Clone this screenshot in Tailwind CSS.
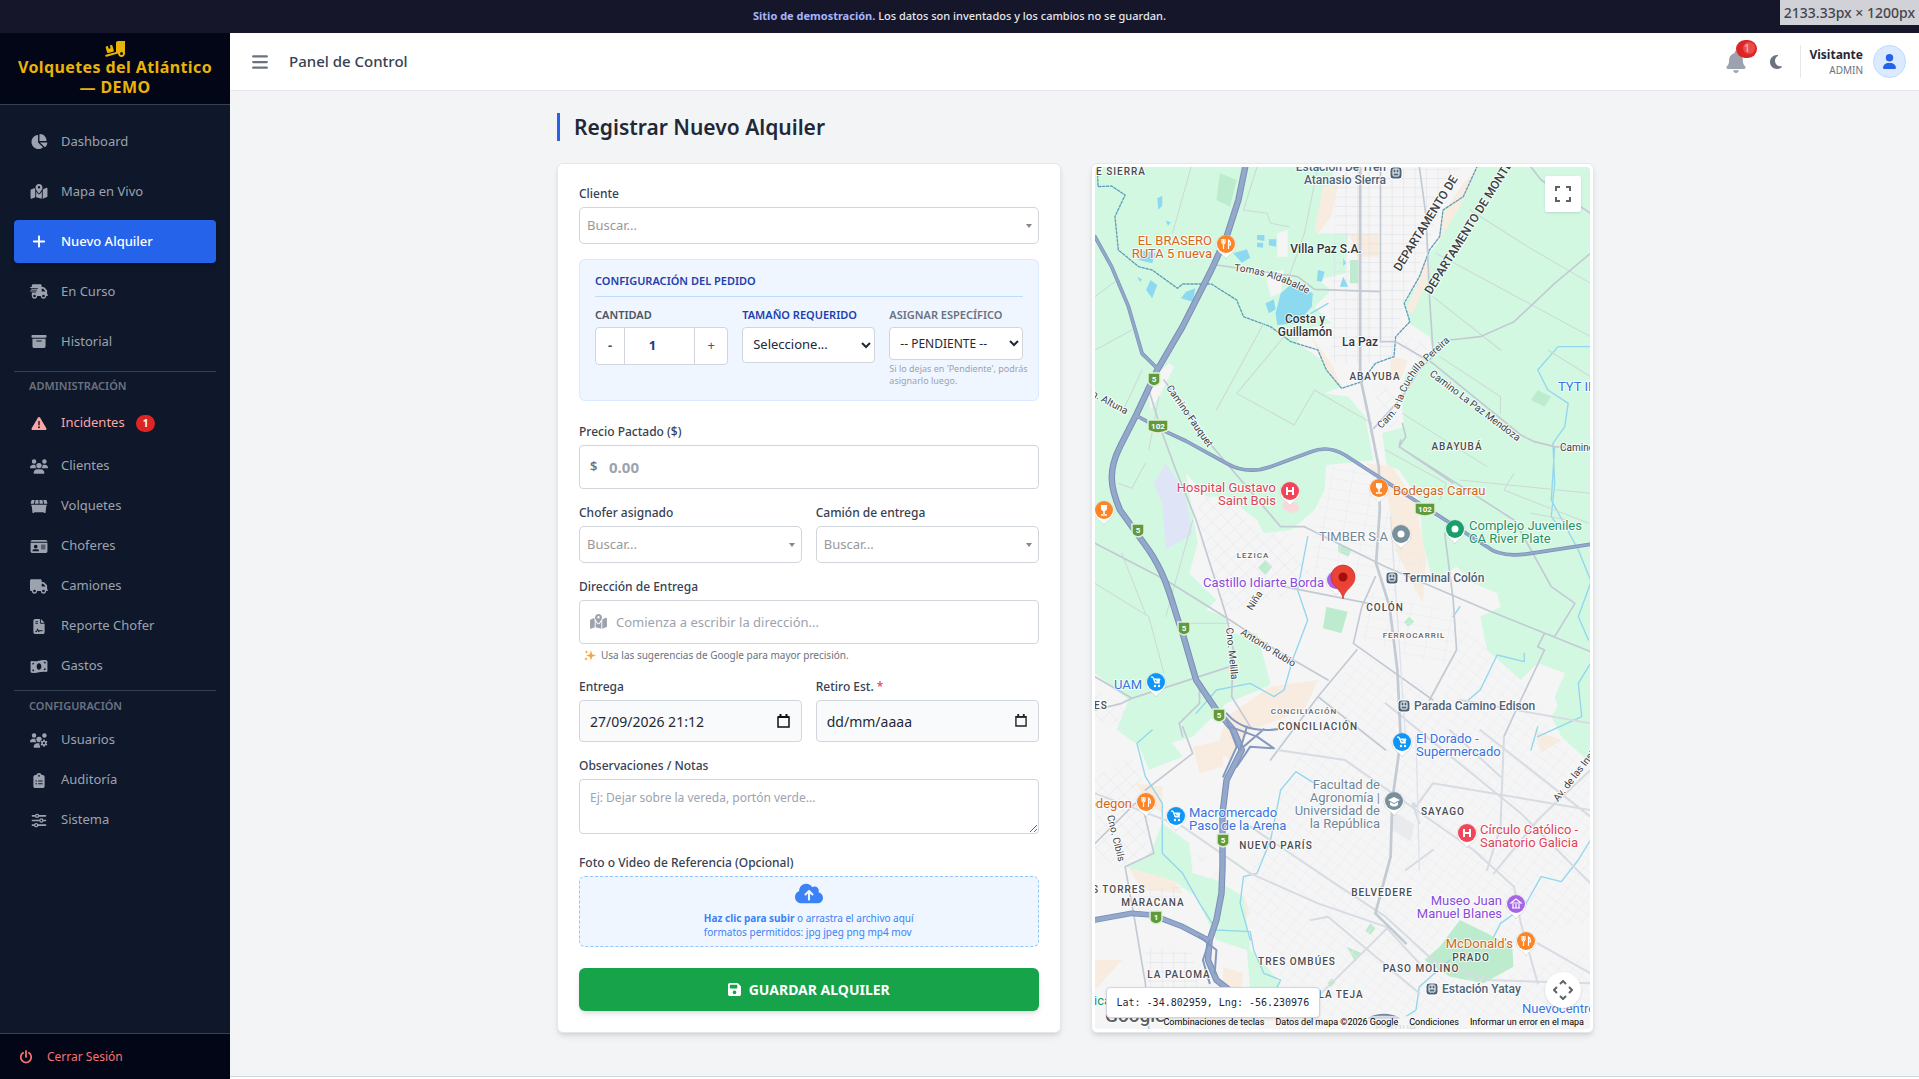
<!DOCTYPE html>
<html lang="es">
<head>
    <meta charset="UTF-8">
    <meta name="viewport" content="width=device-width, initial-scale=1.0">
    <title>Registrar Nuevo Alquiler - Volquetes del Atlántico</title>
    <script src="https://cdn.jsdelivr.net/npm/@tailwindcss/browser@4"></script>
</head>
<body class="h-screen flex flex-col overflow-hidden bg-[#f3f4f6] text-gray-800 font-['Noto_Sans','Open_Sans',sans-serif]">

    <!-- Aviso de demo -->
    <div class="relative shrink-0 h-[33px] bg-[#16162a] text-gray-200 text-[11px] font-medium flex items-center justify-center">
        <p><b class="font-bold text-[#a5b4fc]">Sitio de demostración.</b> Los datos son inventados y los cambios no se guardan.</p>
        <div class="absolute top-0 right-0 h-[25px] px-1 bg-[#d1d1d8] text-[#45454d] text-[14px] flex items-center">2133.33px × 1200px</div>
    </div>

    <div class="flex-1 flex min-h-0">
        <!-- Menú lateral -->
        <aside class="w-[230px] shrink-0 bg-[#0f172a] text-[#9ca3af] flex flex-col">
            <div class="h-[72px] shrink-0 bg-[#020617] border-b border-[#374151] text-[#eab308] font-bold text-[16px] leading-5 tracking-wide text-center flex flex-col items-center pt-2">
                <svg class="w-5 h-4 shrink-0" viewBox="0 0 640 512" fill="currentColor"><path d="M640 0l0 400c0 61.9-50.1 112-112 112c-61 0-111.1-48.7-112-109.5L48.4 502.9c-17.1 4.6-34.6-5.4-39.3-22.5s5.4-34.6 22.5-39.3L352 353.8 352 64c0-35.3 28.7-64 64-64L640 0zM576 400a48 48 0 1 0 -96 0 48 48 0 1 0 96 0zM23.1 207.7c-4.6-17.1 5.6-34.6 22.6-39.2l46.4-12.4 20.7 77.3c2.3 8.5 11.1 13.6 19.6 11.3l30.9-8.3c8.5-2.3 13.6-11.1 11.3-19.6l-20.7-77.3 46.4-12.4c17.1-4.6 34.6 5.6 39.2 22.6l41.4 154.5c4.6 17.1-5.6 34.6-22.6 39.2L103.7 384.9c-17.1 4.6-34.6-5.6-39.2-22.6L23.1 207.7z"/></svg>
                <span>Volquetes del Atlántico<br>— DEMO</span>
            </div>
            <nav class="flex-1 px-[14px] pt-[15px] text-[13px]">
                <div class="flex flex-col gap-[7px]">
                    <a href="#" class="h-[43px] px-4 flex items-center gap-[13px]">
                        <svg class="w-[18px] h-[15px]" viewBox="0 0 576 512" fill="currentColor"><path d="M304 240l0-223.4c0-9 7-16.6 16-16.6C443.7 0 544 100.3 544 224c0 9-7.6 16-16.6 16L304 240zM32 272C32 150.7 122.1 50.3 239 34.3c9.2-1.3 17 6.1 17 15.4L256 288 412.5 444.5c6.7 6.7 6.2 17.7-1.5 23.1C371.8 495.6 323.8 512 272 512C139.5 512 32 404.6 32 272zm526.4 16c9.3 0 16.6 7.8 15.4 17c-7.7 55.9-34.6 105.6-73.9 142.3c-6 5.6-15.4 5.2-21.2-.7L320 288l238.4 0z"/></svg>
                        Dashboard
                    </a>
                    <a href="#" class="h-[43px] px-4 flex items-center gap-[13px]">
                        <svg class="w-[18px] h-[15px]" viewBox="0 0 576 512" fill="currentColor"><path d="M408 120c0 54.6-73.1 151.9-105.2 192c-7.7 9.6-22 9.6-29.6 0C241.1 271.9 168 174.6 168 120C168 53.7 221.7 0 288 0s120 53.7 120 120zm8 80.4c3.5-6.9 6.7-13.8 9.6-20.6c.5-1.2 1-2.5 1.5-3.7l116-46.4C558.9 123.4 576 135 576 152l0 270.8c0 9.8-6 18.6-15.1 22.3L416 503l0-302.6zM137.6 138.3c2.4 14.1 7.2 28.3 12.8 41.5c2.9 6.8 6.1 13.7 9.6 20.6l0 251.4L32.9 502.7C17.1 509 0 497.4 0 480.4L0 209.6c0-9.8 6-18.6 15.1-22.3l122.6-49zM327.8 332c13.9-17.4 35.7-45.7 56.2-77l0 249.3L192 449.4 192 255c20.5 31.3 42.3 59.6 56.2 77c20.5 25.6 59.1 25.6 79.6 0zM288 152a40 40 0 1 0 0-80 40 40 0 1 0 0 80z"/></svg>
                        Mapa en Vivo
                    </a>
                    <a href="#" class="h-[43px] px-4 flex items-center gap-[13px] bg-[#2563eb] text-white font-medium rounded shadow-md">
                        <svg class="w-[18px] h-[15px]" viewBox="0 0 448 512" fill="currentColor"><path d="M256 80c0-17.7-14.3-32-32-32s-32 14.3-32 32l0 144L48 224c-17.7 0-32 14.3-32 32s14.3 32 32 32l144 0 0 144c0 17.7 14.3 32 32 32s32-14.3 32-32l0-144 144 0c17.7 0 32-14.3 32-32s-14.3-32-32-32l-144 0 0-144z"/></svg>
                        Nuevo Alquiler
                    </a>
                    <a href="#" class="h-[43px] px-4 flex items-center gap-[13px]">
                        <svg class="w-[18px] h-[15px]" viewBox="0 0 640 512" fill="currentColor"><path d="M112 0C85.5 0 64 21.5 64 48l0 48L16 96c-8.8 0-16 7.2-16 16s7.2 16 16 16l48 0 208 0c8.8 0 16 7.2 16 16s-7.2 16-16 16L64 160l-16 0c-8.8 0-16 7.2-16 16s7.2 16 16 16l16 0 176 0c8.8 0 16 7.2 16 16s-7.2 16-16 16L64 224l-48 0c-8.8 0-16 7.2-16 16s7.2 16 16 16l48 0 144 0c8.8 0 16 7.2 16 16s-7.2 16-16 16L64 288l0 128c0 53 43 96 96 96s96-43 96-96l128 0c0 53 43 96 96 96s96-43 96-96l32 0c17.7 0 32-14.3 32-32s-14.3-32-32-32l0-64 0-32 0-18.7c0-17-6.7-33.3-18.7-45.3L512 114.7c-12-12-28.3-18.7-45.3-18.7L416 96l0-48c0-26.5-21.5-48-48-48L112 0zM544 237.3l0 18.7-128 0 0-96 50.7 0L544 237.3zM160 368a48 48 0 1 1 0 96 48 48 0 1 1 0-96zm272 48a48 48 0 1 1 96 0 48 48 0 1 1 -96 0z"/></svg>
                        En Curso
                    </a>
                    <a href="#" class="h-[43px] px-4 flex items-center gap-[13px]">
                        <svg class="w-[18px] h-[15px]" viewBox="0 0 512 512" fill="currentColor"><path d="M32 32l448 0c17.7 0 32 14.3 32 32l0 32c0 17.7-14.3 32-32 32L32 128C14.3 128 0 113.7 0 96L0 64C0 46.3 14.3 32 32 32zm0 128l448 0 0 256c0 35.3-28.7 64-64 64L96 480c-35.3 0-64-28.7-64-64l0-256zm128 80c0 8.8 7.2 16 16 16l160 0c8.8 0 16-7.2 16-16s-7.2-16-16-16l-160 0c-8.8 0-16 7.2-16 16z"/></svg>
                        Historial
                    </a>
                </div>

                <p class="mt-2 border-t border-[#374151] pt-[6px] pl-[15px] text-[11px] leading-4 font-semibold text-[#6b7280]">ADMINISTRACIÓN</p>
                <div class="mt-2 flex flex-col gap-1">
                    <a href="#" class="h-[42px] px-4 flex items-center gap-[13px] text-[#fca5a5]">
                        <svg class="w-[18px] h-[15px]" viewBox="0 0 512 512" fill="currentColor"><path d="M256 32c14.2 0 27.3 7.5 34.5 19.8l216 368c7.3 12.4 7.3 27.7 .2 40.1S486.3 480 472 480L40 480c-14.3 0-27.6-7.7-34.7-20.1s-7-27.8 .2-40.1l216-368C228.7 39.5 241.8 32 256 32zm0 128c-13.3 0-24 10.7-24 24l0 112c0 13.3 10.7 24 24 24s24-10.7 24-24l0-112c0-13.3-10.7-24-24-24zm32 224a32 32 0 1 0 -64 0 32 32 0 1 0 64 0z"/></svg>
                        Incidentes
                        <span class="-ml-[2px] h-[17px] px-[7px] rounded-full bg-[#dc2626] text-white text-[10px] font-bold flex items-center">1</span>
                    </a>
                    <a href="#" class="h-9 px-4 flex items-center gap-[13px]">
                        <svg class="w-[18px] h-[15px]" viewBox="0 0 640 512" fill="currentColor"><path d="M144 0a80 80 0 1 1 0 160A80 80 0 1 1 144 0zM512 0a80 80 0 1 1 0 160A80 80 0 1 1 512 0zM0 298.7C0 239.8 47.8 192 106.7 192l42.7 0c15.9 0 31 3.5 44.6 9.7c-1.3 7.2-1.9 14.7-1.9 22.3c0 38.2 16.8 72.5 43.3 96c-.2 0-.4 0-.7 0L21.3 320C9.6 320 0 310.4 0 298.7zM405.3 320c-.2 0-.4 0-.7 0c26.6-23.5 43.3-57.8 43.3-96c0-7.6-.7-15-1.9-22.3c13.6-6.3 28.7-9.7 44.6-9.7l42.7 0C592.2 192 640 239.8 640 298.7c0 11.8-9.6 21.3-21.3 21.3l-213.3 0zM224 224a96 96 0 1 1 192 0 96 96 0 1 1 -192 0zM128 485.3C128 411.7 187.7 352 261.3 352l117.3 0C452.3 352 512 411.7 512 485.3c0 14.7-11.9 26.7-26.7 26.7l-330.7 0c-14.7 0-26.7-11.9-26.7-26.7z"/></svg>
                        Clientes
                    </a>
                    <a href="#" class="h-9 px-4 flex items-center gap-[13px]">
                        <svg class="w-[18px] h-[15px]" viewBox="0 0 576 512" fill="currentColor"><path d="M50 32h91l-26 128H18c-12 0-19-9-16-20L34 44c2-7 8-12 16-12zM173 32h99v128H147zM304 32h99l26 128H304zM435 32h91c8 0 14 5 16 12l32 96c3 11-4 20-16 20h-97zM32 192h512c9 0 16 7 16 16v16h-8c-9 0-16 7-16 16l-4 32-20 176c0 18-14 32-32 32s-32-14-32-32H128c0 18-14 32-32 32s-32-14-32-32L44 272l-4-32c0-9-7-16-16-16h-8v-16c0-9 7-16 16-16z"/></svg>
                        Volquetes
                    </a>
                    <a href="#" class="h-9 px-4 flex items-center gap-[13px]">
                        <svg class="w-[18px] h-[15px]" viewBox="0 0 576 512" fill="currentColor"><path d="M0 96l576 0c0-35.3-28.7-64-64-64L64 32C28.7 32 0 60.7 0 96zm0 32L0 416c0 35.3 28.7 64 64 64l448 0c35.3 0 64-28.7 64-64l0-288L0 128zM64 405.3c0-29.5 23.9-53.3 53.3-53.3l117.3 0c29.5 0 53.3 23.9 53.3 53.3c0 5.9-4.8 10.7-10.7 10.7L74.7 416c-5.9 0-10.7-4.8-10.7-10.7zM176 192a64 64 0 1 1 0 128 64 64 0 1 1 0-128zm176 16c0-8.8 7.2-16 16-16l128 0c8.8 0 16 7.2 16 16s-7.2 16-16 16l-128 0c-8.8 0-16-7.2-16-16zm0 64c0-8.8 7.2-16 16-16l128 0c8.8 0 16 7.2 16 16s-7.2 16-16 16l-128 0c-8.8 0-16-7.2-16-16zm0 64c0-8.8 7.2-16 16-16l128 0c8.8 0 16 7.2 16 16s-7.2 16-16 16l-128 0c-8.8 0-16-7.2-16-16z"/></svg>
                        Choferes
                    </a>
                    <a href="#" class="h-9 px-4 flex items-center gap-[13px]">
                        <svg class="w-[18px] h-[15px]" viewBox="0 0 640 512" fill="currentColor"><path d="M48 0C21.5 0 0 21.5 0 48L0 368c0 26.5 21.5 48 48 48l16 0c0 53 43 96 96 96s96-43 96-96l128 0c0 53 43 96 96 96s96-43 96-96l32 0c17.7 0 32-14.3 32-32s-14.3-32-32-32l0-64 0-32 0-18.7c0-17-6.7-33.3-18.7-45.3L512 114.7c-12-12-28.3-18.7-45.3-18.7L416 96l0-48c0-26.5-21.5-48-48-48L48 0zM416 160l50.7 0L544 237.3l0 18.7-128 0 0-96zM112 416a48 48 0 1 1 96 0 48 48 0 1 1 -96 0zm368-48a48 48 0 1 1 0 96 48 48 0 1 1 0-96z"/></svg>
                        Camiones
                    </a>
                    <a href="#" class="h-9 px-4 flex items-center gap-[13px]">
                        <svg class="w-[18px] h-[15px]" viewBox="0 0 384 512" fill="currentColor" fill-rule="evenodd"><path d="M64 0h160v128c0 18 14 32 32 32h128v288c0 35-29 64-64 64H64c-35 0-64-29-64-64V64C0 29 29 0 64 0zm192 0l128 128H256zM80 64c-21 0-21 32 0 32h64c21 0 21-32 0-32zm0 64c-21 0-21 32 0 32h64c21 0 21-32 0-32zM64 416c-10 0-16 32 16 32h4c24 0 45-16 52-39l8-28 21 56c5 14 25 16 34 3l11-20h94c21 0 21-32 0-32H198c-14 0-16 3-20 11l-19-56c-6-17-30-17-36 1l-18 57c-3 9-11 15-21 15z"/></svg>
                        Reporte Chofer
                    </a>
                    <a href="#" class="h-9 px-4 flex items-center gap-[13px]">
                        <svg class="w-[18px] h-[15px]" viewBox="0 0 576 512" fill="currentColor" fill-rule="evenodd"><path d="M0 112c0-26 21-44 48-40 80 14 160 8 240-16S448 20 540 40c22 5 36 24 36 46v314c0 26-21 44-48 40-80-14-160-8-240 16S128 492 36 472c-22-5-36-24-36-46zM288 144c-53 0-80 50-80 112s27 112 80 112 80-50 80-112-27-112-80-112zM64 136v56c32 0 60-22 62-52zM64 410c22 5 42 8 64 6 0-34-28-64-64-64zM512 160c-34-2-60-32-62-62 22-2 42 0 62 4zM512 376c-24-3-42-4-64-2 2-34 30-58 64-54z"/></svg>
                        Gastos
                    </a>
                </div>

                <p class="mt-[6px] border-t border-[#374151] pt-[7px] pl-[15px] text-[11px] leading-4 font-semibold text-[#6b7280]">CONFIGURACIÓN</p>
                <div class="mt-2 flex flex-col gap-1">
                    <a href="#" class="h-9 px-4 flex items-center gap-[13px]">
                        <svg class="w-[18px] h-[15px]" viewBox="0 0 640 512" fill="currentColor"><path d="M144 160A80 80 0 1 0 144 0a80 80 0 1 0 0 160zm368 0A80 80 0 1 0 512 0a80 80 0 1 0 0 160zM0 298.7C0 310.4 9.6 320 21.3 320l213.3 0c.2 0 .4 0 .7 0c-26.6-23.5-43.3-57.8-43.3-96c0-7.6 .7-15 1.9-22.3c-13.6-6.3-28.7-9.7-44.6-9.7l-42.7 0C47.8 192 0 239.8 0 298.7zM320 320c-53 0-96-43-96-96a96 96 0 1 1 190 18c-30 18-60 40-66 74zM261 352h75c-10 40 0 76 24 104v56H155c-15 0-27-12-27-27 0-73 60-133 133-133z"/><path fill-rule="evenodd" d="M472 224h48l8 40 28 16 38-13 24 42-30 27v32l30 27-24 42-38-13-28 16-8 40h-48l-8-40-28-16-38 13-24-42 30-27v-32l-30-27 24-42 38 13 28-16zm24 88a40 40 0 1 0 0 80 40 40 0 1 0 0-80z"/></svg>
                        Usuarios
                    </a>
                    <a href="#" class="h-9 px-4 flex items-center gap-[13px]">
                        <svg class="w-[18px] h-[15px]" viewBox="0 0 384 512" fill="currentColor"><path d="M192 0c-41.8 0-77.4 26.7-90.5 64L64 64C28.7 64 0 92.7 0 128L0 448c0 35.3 28.7 64 64 64l256 0c35.3 0 64-28.7 64-64l0-320c0-35.3-28.7-64-64-64l-37.5 0C269.4 26.7 233.8 0 192 0zm0 64a32 32 0 1 1 0 64 32 32 0 1 1 0-64zM72 272a24 24 0 1 1 48 0 24 24 0 1 1 -48 0zm104-16l128 0c8.8 0 16 7.2 16 16s-7.2 16-16 16l-128 0c-8.8 0-16-7.2-16-16s7.2-16 16-16zM72 368a24 24 0 1 1 48 0 24 24 0 1 1 -48 0zm88 0c0-8.8 7.2-16 16-16l128 0c8.8 0 16 7.2 16 16s-7.2 16-16 16l-128 0c-8.8 0-16-7.2-16-16z"/></svg>
                        Auditoría
                    </a>
                    <a href="#" class="h-9 px-4 flex items-center gap-[13px]">
                        <svg class="w-[18px] h-[15px]" viewBox="0 0 512 512" fill="none" stroke="currentColor" stroke-width="56" stroke-linecap="round"><path d="M32 96h96M256 96h224M32 256h224M400 256h80M32 416h64M224 416h256"/><g stroke-width="44"><circle cx="192" cy="96" r="52"/><circle cx="336" cy="256" r="52"/><circle cx="160" cy="416" r="52"/></g></svg>
                        Sistema
                    </a>
                </div>
            </nav>
            <a href="#" class="h-[46px] shrink-0 bg-[#020617] border-t border-[#374151] text-[#f87171] text-[12px] flex items-center gap-[14px] pl-[19px]">
                <svg class="w-[14px] h-[14px]" viewBox="0 0 512 512" fill="none" stroke="currentColor" stroke-width="64" stroke-linecap="round"><path d="M256 32v220M152 104a192 192 0 1 0 208 0"/></svg>
                Cerrar Sesión
            </a>
        </aside>

        <div class="flex-1 min-w-0 flex flex-col">
            <!-- Barra superior -->
            <header class="h-[58px] shrink-0 bg-white border-b border-gray-200 flex items-center justify-between pl-[22px] pr-[13px]">
                <div class="flex items-center gap-[21px]">
                    <button type="button" aria-label="Menú" class="text-[#6b7280]">
                        <svg class="w-4 h-[18px]" viewBox="0 0 448 512" fill="currentColor"><path d="M0 96C0 78.3 14.3 64 32 64l384 0c17.7 0 32 14.3 32 32s-14.3 32-32 32L32 128C14.3 128 0 113.7 0 96zM0 256c0-17.7 14.3-32 32-32l384 0c17.7 0 32 14.3 32 32s-14.3 32-32 32L32 288c-17.7 0-32-14.3-32-32zM448 416c0 17.7-14.3 32-32 32L32 448c-17.7 0-32-14.3-32-32s14.3-32 32-32l384 0c17.7 0 32 14.3 32 32z"/></svg>
                    </button>
                    <h2 class="text-[15px] font-medium text-[#374151]">Panel de Control</h2>
                </div>
                <div class="flex items-center">
                    <button type="button" aria-label="Notificaciones" class="relative text-[#9ca3af] mr-[24px]">
                        <svg class="w-5 h-[22px]" viewBox="0 0 448 512" fill="currentColor"><path d="M224 0c-17.7 0-32 14.3-32 32l0 19.2C119 66 64 130.6 64 208l0 18.8c0 47-17.3 92.4-48.5 127.6l-7.4 8.3c-8.4 9.4-10.4 22.9-5.3 34.4S19.4 416 32 416l384 0c12.6 0 24-7.4 29.2-18.9s3.1-25-5.3-34.4l-7.4-8.3C401.3 319.2 384 273.9 384 226.8l0-18.8c0-77.4-55-142-128-156.8L256 32c0-17.7-14.3-32-32-32zm45.3 493.3c12-12 18.7-28.3 18.7-45.3l-64 0-64 0c0 17 6.7 33.3 18.7 45.3s28.3 18.7 45.3 18.7s33.3-6.7 45.3-18.7z"/></svg>
                        <span class="absolute -top-[11px] left-[10px] w-[21px] h-[18px] rounded-full bg-[#dc2626] text-[#fecaca] text-[10px] font-bold flex items-center justify-center">1</span>
                        <span class="absolute -top-[9px] left-[17px] size-3 rounded-full bg-[#f87171]/50"></span>
                    </button>
                    <button type="button" aria-label="Modo oscuro" class="text-[#6b7280] mr-[18px]">
                        <svg class="w-3 h-4" viewBox="0 0 384 512" fill="currentColor"><path d="M223.5 32C100 32 0 132.3 0 256S100 480 223.5 480c60.6 0 115.5-24.2 155.8-63.4c5-4.9 6.3-12.5 3.1-18.7s-10.1-9.7-17-8.5c-9.8 1.7-19.8 2.6-30.1 2.6c-96.9 0-175.5-78.8-175.5-176c0-65.8 36-123.1 89.3-153.3c6.1-3.5 9.2-10.5 7.7-17.3s-7.3-11.9-14.3-12.5c-6.3-.5-12.6-.8-19-.8z"/></svg>
                    </button>
                    <div class="h-[33px] border-l border-gray-200 pl-2 flex items-center gap-[10px]">
                        <div class="text-right">
                            <p class="text-[12px] leading-4 font-bold text-gray-800">Visitante</p>
                            <p class="text-[10px] leading-[14px] text-gray-500">ADMIN</p>
                        </div>
                        <div class="size-[33px] rounded-full bg-[#dbeafe] border border-[#bfdbfe] text-[#2563eb] flex items-center justify-center">
                            <svg class="w-[13px] h-[15px]" viewBox="0 0 448 512" fill="currentColor"><path d="M224 256A128 128 0 1 0 224 0a128 128 0 1 0 0 256zm-45.7 48C79.8 304 0 383.8 0 482.3C0 498.7 13.3 512 29.7 512l388.6 0c16.4 0 29.7-13.3 29.7-29.7C448 383.8 368.2 304 269.7 304l-91.4 0z"/></svg>
                        </div>
                    </div>
                </div>
            </header>

            <main class="flex-1 min-h-0 pl-[26px] pr-6 pt-[22px] flex flex-col">
                <div class="w-full max-w-[1037px] mx-auto">
                    <h1 class="border-l-[3px] border-[#2563eb] pl-[14px] text-[21px] leading-7 font-semibold text-[#1f2937] mb-[22px]">Registrar Nuevo Alquiler</h1>

                    <div class="grid grid-cols-2 gap-[30px]">
                        <form class="bg-white border border-gray-200 rounded-md shadow-md p-[21px] text-[12px] flex flex-col gap-[15px]">
                            <div>
                                <label for="cliente" class="block font-medium leading-[18px] mb-1 text-[#374151]">Cliente</label>
                                <div class="relative">
                                    <select id="cliente" class="appearance-none w-full h-[37px] border border-gray-300 rounded-[5px] bg-white pl-[7px] text-[13px] text-[#999]"><option>Buscar...</option></select>
                                    <span class="absolute right-[7px] top-[17px] border-x-[3px] border-t-4 border-x-transparent border-t-[#888]"></span>
                                </div>
                            </div>

                            <fieldset class="bg-[#eff6ff] border border-[#dbeafe] rounded-md px-[15px] pt-3 pb-[13px] mb-[7px]">
                                <h3 class="text-[11px] leading-[18px] font-semibold text-[#1e40af] border-b border-[#bfdbfe] pb-[6px] mb-[10px]">CONFIGURACIÓN DEL PEDIDO</h3>
                                <div class="grid grid-cols-3 gap-[14px] items-start">
                                    <div>
                                        <label for="cantidad" class="block text-[11px] leading-4 mb-1 font-semibold text-[#4b5563]">CANTIDAD</label>
                                        <div class="h-[38px] flex border border-gray-300 rounded bg-white text-gray-600 overflow-hidden">
                                            <button type="button" class="w-7 font-bold text-[13px]">-</button>
                                            <input id="cantidad" type="text" inputmode="numeric" value="1" class="flex-1 min-w-0 border-x border-gray-300 pr-[14px] text-center text-[13px] font-bold text-[#1e3a8a]">
                                            <button type="button" class="w-8 text-[13px]">+</button>
                                        </div>
                                    </div>
                                    <div>
                                        <label for="tamano" class="block text-[11px] leading-4 mb-1 font-semibold text-[#1e40af]">TAMAÑO REQUERIDO</label>
                                        <div class="relative">
                                            <select id="tamano" class="appearance-none w-full h-9 border border-gray-300 rounded bg-white pl-[10px] text-[13px] text-gray-800"><option>Seleccione...</option></select>
                                            <svg class="absolute right-1 top-[14px] w-[10px] h-2" viewBox="0 0 10 8" fill="none" stroke="#1f2937" stroke-width="2"><path d="M1 2l4 4 4-4"/></svg>
                                        </div>
                                    </div>
                                    <div>
                                        <label for="asignar" class="block text-[11px] leading-4 mb-1 font-semibold text-[#6b7280]">ASIGNAR ESPECÍFICO</label>
                                        <div class="relative">
                                            <select id="asignar" class="appearance-none w-full h-[33px] border border-gray-300 rounded bg-white pl-[10px] text-[12px] text-gray-800"><option>-- PENDIENTE --</option></select>
                                            <svg class="absolute right-1 top-3 w-[10px] h-2" viewBox="0 0 10 8" fill="none" stroke="#1f2937" stroke-width="2"><path d="M1 2l4 4 4-4"/></svg>
                                        </div>
                                        <p class="mt-[3px] -mr-3 text-[9px] leading-3 text-[#9ca3af]">Si lo dejas en 'Pendiente', podrás<br>asignarlo luego.</p>
                                    </div>
                                </div>
                            </fieldset>

                            <div>
                                <label for="precio" class="block font-medium leading-[18px] mb-1 text-[#374151]">Precio Pactado ($)</label>
                                <div class="relative">
                                    <span class="absolute inset-y-0 left-[11px] flex items-center font-semibold text-[13px] text-gray-500">$</span>
                                    <input id="precio" type="text" placeholder="0.00" class="w-full h-11 border border-gray-300 rounded pl-[29px] text-[15px] font-bold placeholder:text-[#9ca3af]">
                                </div>
                            </div>

                            <div class="grid grid-cols-2 gap-[14px]">
                                <div>
                                    <label for="chofer" class="block font-medium leading-[18px] mb-1 text-[#374151]">Chofer asignado</label>
                                    <div class="relative">
                                        <select id="chofer" class="appearance-none w-full h-[37px] border border-gray-300 rounded-[5px] bg-white pl-[7px] text-[13px] text-[#999]"><option>Buscar...</option></select>
                                        <span class="absolute right-[7px] top-[17px] border-x-[3px] border-t-4 border-x-transparent border-t-[#888]"></span>
                                    </div>
                                </div>
                                <div>
                                    <label for="camion" class="block font-medium leading-[18px] mb-1 text-[#374151]">Camión de entrega</label>
                                    <div class="relative">
                                        <select id="camion" class="appearance-none w-full h-[37px] border border-gray-300 rounded-[5px] bg-white pl-[7px] text-[13px] text-[#999]"><option>Buscar...</option></select>
                                        <span class="absolute right-[7px] top-[17px] border-x-[3px] border-t-4 border-x-transparent border-t-[#888]"></span>
                                    </div>
                                </div>
                            </div>

                            <div>
                                <label for="direccion" class="block font-medium leading-[18px] mb-1 text-[#374151]">Dirección de Entrega</label>
                                <div class="relative">
                                    <svg class="absolute left-[11px] top-[14px] w-[17px] h-[15px] text-[#9ca3af]" viewBox="0 0 576 512" fill="currentColor"><path d="M408 120c0 54.6-73.1 151.9-105.2 192c-7.7 9.6-22 9.6-29.6 0C241.1 271.9 168 174.6 168 120C168 53.7 221.7 0 288 0s120 53.7 120 120zm8 80.4c3.5-6.9 6.7-13.8 9.6-20.6c.5-1.2 1-2.5 1.5-3.7l116-46.4C558.9 123.4 576 135 576 152l0 270.8c0 9.8-6 18.6-15.1 22.3L416 503l0-302.6zM137.6 138.3c2.4 14.1 7.2 28.3 12.8 41.5c2.9 6.8 6.1 13.7 9.6 20.6l0 251.4L32.9 502.7C17.1 509 0 497.4 0 480.4L0 209.6c0-9.8 6-18.6 15.1-22.3l122.6-49zM327.8 332c13.9-17.4 35.7-45.7 56.2-77l0 249.3L192 449.4 192 255c20.5 31.3 42.3 59.6 56.2 77c20.5 25.6 59.1 25.6 79.6 0zM288 152a40 40 0 1 0 0-80 40 40 0 1 0 0 80z"/></svg>
                                    <input id="direccion" type="text" placeholder="Comienza a escribir la dirección..." class="w-full h-11 border border-gray-300 rounded pl-9 text-[13px] placeholder:text-[#9ca3af]">
                                </div>
                                <p class="mt-[3px] ml-[5px] h-4 flex items-center gap-[5px] text-[10px] text-gray-500">
                                    <svg class="w-3 h-3" viewBox="0 0 24 24" fill="#f5a742"><path d="M14 3l2.4 7.6L24 13l-7.6 2.4L14 23l-2.4-7.6L4 13l7.6-2.4zM5 2l1 3 3 1-3 1-1 3-1-3-3-1 3-1zM4 16l1 2.500L7.500 20 5 21l-1 3-1-3-2.500-1L3 18.500z"/></svg>
                                    Usa las sugerencias de Google para mayor precisión.
                                </p>
                            </div>

                            <div class="grid grid-cols-2 gap-[14px]">
                                <div>
                                    <label for="entrega" class="block font-medium leading-[18px] mb-1 text-[#374151]">Entrega</label>
                                    <div class="relative">
                                        <input id="entrega" type="text" value="27/09/2026 21:12" class="w-full h-[42px] border border-gray-300 rounded bg-[#f9fafb] px-[10px] text-[14px] text-gray-800">
                                        <svg class="absolute right-3 top-[14px] w-[13px] h-[14px]" viewBox="0 0 13 14" fill="none" stroke="#111"><path d="M1 3v10h11V3z" stroke-width="1.5"/><path d="M1 3h11M3.5 0v3M9.5 0v3" stroke-width="2"/></svg>
                                    </div>
                                </div>
                                <div>
                                    <label for="retiro" class="block font-medium leading-[18px] mb-1 text-[#374151]">Retiro Est. <span class="text-[#ef4444]">*</span></label>
                                    <div class="relative">
                                        <input id="retiro" type="text" value="dd/mm/aaaa" class="w-full h-[42px] border border-gray-300 rounded bg-[#f9fafb] px-[10px] text-[14px] text-gray-800">
                                        <svg class="absolute right-3 top-[14px] w-[12px] h-[13px]" viewBox="0 0 13 14" fill="none" stroke="#222"><path d="M1 3v10h11V3z" stroke-width="1.5"/><path d="M1 3h11M3.5 0v3M9.5 0v3" stroke-width="2"/></svg>
                                    </div>
                                </div>
                            </div>

                            <div>
                                <label for="notas" class="block font-medium leading-[18px] mb-1 text-[#374151]">Observaciones / Notas</label>
                                <textarea id="notas" placeholder="Ej: Dejar sobre la vereda, portón verde..." class="block w-full h-[55px] border border-gray-300 rounded px-[10px] pt-[9px] text-[12px] leading-[18px] placeholder:text-[#9ca3af]"></textarea>
                            </div>

                            <div class="mt-[5px]">
                                <p class="font-medium leading-[18px] mb-1 text-[#374151]">Foto o Video de Referencia (Opcional)</p>
                                <label for="archivo" class="h-[71px] flex flex-col items-center border border-dashed border-[#93c5fd] rounded-md bg-[#eff6ff] text-[#3b82f6] pt-[5px]">
                                    <svg class="w-7 h-[23px]" viewBox="0 0 640 512" fill="currentColor"><path d="M144 480C64.5 480 0 415.5 0 336c0-62.8 40.2-116.2 96.2-135.9c-.1-2.7-.2-5.4-.2-8.1c0-88.4 71.6-160 160-160c59.3 0 111 32.2 138.7 80.2C409.9 102 428.3 96 448 96c53 0 96 43 96 96c0 12.2-2.3 23.8-6.4 34.6C596 238.4 640 290.1 640 352c0 70.7-57.3 128-128 128l-368 0zm79-217c-9.4 9.4-9.4 24.6 0 33.9s24.6 9.4 33.9 0l39-39L296 392c0 13.3 10.7 24 24 24s24-10.7 24-24l0-134.1 39 39c9.4 9.4 24.6 9.4 33.9 0s9.4-24.6 0-33.9l-80-80c-9.4-9.4-24.6-9.4-33.9 0l-80 80z"/></svg>
                                    <span class="mt-[6px] text-[10px] leading-[14px]"><b class="font-bold">Haz clic para subir</b> o arrastra el archivo aquí<br>formatos permitidos: jpg jpeg png mp4 mov</span>
                                    <input id="archivo" type="file" class="hidden">
                                </label>
                            </div>

                            <button type="submit" class="mt-[6px] h-[43px] rounded-md bg-[#16a34a] text-white text-[14px] font-bold shadow-md flex items-center justify-center gap-2">
                                <svg class="w-[13px] h-[15px]" viewBox="0 0 448 512" fill="currentColor"><path d="M64 32C28.7 32 0 60.7 0 96L0 416c0 35.3 28.7 64 64 64l320 0c35.3 0 64-28.7 64-64l0-242.7c0-17-6.7-33.3-18.7-45.3L352 50.7C340 38.7 323.7 32 306.7 32L64 32zm0 96c0-17.7 14.3-32 32-32l192 0c17.7 0 32 14.3 32 32l0 64c0 17.7-14.3 32-32 32L96 224c-17.7 0-32-14.3-32-32l0-64zM224 288a64 64 0 1 1 0 128 64 64 0 1 1 0-128z"/></svg>
                                GUARDAR ALQUILER
                            </button>
                        </form>

                        <!-- Mapa -->
                        <section class="bg-white border border-gray-200 rounded-md shadow-md p-[3px] flex">
                            <div class="relative flex-1 overflow-hidden rounded font-['Roboto',sans-serif]">
                                <svg class="absolute inset-0 w-full h-full" viewBox="41 51 1465 2586" preserveAspectRatio="none" fill="none" stroke-linejoin="round" stroke-linecap="round">
                                    <defs>
                                        <pattern id="g0" width="34" height="28" patternUnits="userSpaceOnUse"><path d="M0 0H34M0 0V28" stroke="#dadee6" stroke-width="3"/></pattern>
                                        <pattern id="g1" width="32" height="26" patternUnits="userSpaceOnUse" patternTransform="rotate(38)"><path d="M0 0H32M0 0V26" stroke="#e9ecf0" stroke-width="3"/></pattern>
                                        <pattern id="g2" width="60" height="30" patternUnits="userSpaceOnUse" patternTransform="rotate(10)"><path d="M0 0H60M0 0V30" stroke="#e6e9ee" stroke-width="3"/></pattern>
                                        <pattern id="g3" width="30" height="34" patternUnits="userSpaceOnUse" patternTransform="rotate(47)"><path d="M0 0H30M0 0V34" stroke="#e4e7ed" stroke-width="3"/></pattern>
                                    </defs>
                                    <rect x="41" y="51" width="1465" height="2586" fill="#d3f8e2"/>
                                    <!-- zonas urbanas -->
                                    <path fill="#f5f5f6" d="M745 51H1170L1130 140 1070 180 1060 270 1030 310 1000 390 957 460 970 520 1030 560 1040 600 960 670 945 720 955 830 890 850 905 960 870 960 840 800 790 740 720 730 770 710 740 650 640 580 650 540 740 520 690 470 740 420 700 390 780 370 790 250 700 250 740 190z"/>
                                    <path fill="#f5f5f6" d="M310 970L370 1040 430 1040 520 1110 540 1150 620 1140 690 1080 720 1020 725 945 870 930 940 960 1000 1050 1010 1180 1040 1290 1110 1250 1160 1300 1230 1330 1240 1370 1180 1400 1200 1500 1300 1590 1350 1540 1460 1580 1390 1700 1420 1760 1506 1840V2637H41V1570L140 1650 105 1740 190 1800 330 1760 390 1700 430 1660 550 1610 560 1600 520 1450 430 1450 430 1400 370 1380 400 1350 320 1270 345 1180z"/>
                                    <path fill="#f5f5f6" d="M195 700L260 640 275 650 230 740 205 780zM545 370L600 360 590 430 560 440zM580 250l30-10v80h-30z"/>
                                    <path fill="#f7ecdf" d="M715 110L760 100 740 200 700 250 690 240zM790 250h90v70h-60zM1130 100L1170 60 1130 150 1060 270 1070 190zM1030 300L1020 400 980 490 960 480 1000 390zM680 560L740 640 770 710 740 690zM915 620l50 10-20 60-30-20zM840 940L920 950 990 1060 1020 1230 1010 1360 930 1200 900 1000zM560 1610L700 1590 660 1680 500 1740 440 1830 400 1800 430 1700zM330 1790L420 1770 420 1850 350 1870zM160 1900L240 1910 240 1990 200 1960zM1340 1740l80 30-60 40zM140 2150l120 20 40 60-120-10zM41 2430l80 0-80 90zM420 2450l60 20-10 60-50-20zM480 2230l20 60-30 40z"/>
                                    <path fill="#dfe5f6" d="M250 940L290 1000 310 1050 330 1150 250 1200 240 1060 215 1000z"/>
                                    <path fill="#d3f8e2" d="M160 1760L240 1740 300 1820 200 1860zM130 2150L200 2120 240 2020 320 2080 330 2170 400 2190 480 2240 500 2400 540 2440 590 2500 570 2540 500 2530 490 2400 400 2370 340 2240 270 2190zM1430 1740h76v70zM1460 1500L1506 1480V1740L1420 1700 1400 1640z"/>
                                    <path fill="#bdebce" d="M410 70L460 90 440 170 400 150zM795 330h25v70h-25zM1120 2310L1200 2350 1275 2390 1278 2450 1190 2500 1090 2480 1015 2430 1060 2390zM725 1370L788 1385 770 1450 715 1435zM760 1180l40 20-10 20-30-15zM545 1230l20 20-20 25-22-22zM970 1400l15 15-18 15-12-14zM855 2320l15 15-15 20-15-12zM785 2390l45 20-20 25zM740 2485l12 12-15 15-8-12zM1350 720l40 20-20 30-40-20z"/>
                                    <path fill="#fad9dc" d="M600 1050L640 1060 645 1080 620 1090 595 1075z"/>
                                    <path fill="#e9eaed" d="M925 1985l60 40-10 50-60-40z"/>
                                    <!-- manzanas -->
                                    <path fill="url(#g0)" d="M750 55H1120L1060 180 1020 300 960 440 930 560 930 620 860 640 740 640 740 520 740 420 750 250z"/>
                                    <path fill="url(#g3)" d="M935 540L1030 590 1000 630 930 590zM860 700l60 20 20 100-40 20z"/>
                                    <path fill="url(#g3)" d="M345 1030L430 1040 540 1160 600 1140 690 1280 640 1330 480 1370 430 1390 350 1170z"/>
                                    <path fill="url(#g2)" d="M690 1130L730 950 870 960 880 1230 840 1310 690 1290zM880 1060L1000 1180 1010 1330 890 1320zM840 1320L1110 1390 1100 1560 830 1470z"/>
                                    <path fill="url(#g1)" d="M830 1510L1070 1640 1130 1400 1200 1500 1310 1600 1400 1760 1506 1850V2310L1275 2380 1120 2300 1015 2430 1100 2490 1270 2470 1506 2400V2637H600L590 2480 500 2290 480 2180 590 1950 620 1870 700 1650z"/>
                                    <path fill="url(#g3)" d="M41 1880L150 1820 200 1950 210 2110 120 2160 41 2110zM310 2100l70 20-60 30zM350 2180l80-30-30 50zM41 1620l110 60-20 60-90-30z"/>
                                    <path fill="url(#g0)" d="M190 2390l140 20 20 120-150 40zM150 2220l150-10-20 60-130 10z"/>
                                    <!-- agua -->
                                    <path fill="#8dd9f0" d="M590 430L625 400 685 430 682 470 640 520 580 525 575 490zM545 460l25-12 5 30-20 12zM450 310l40-12 10 25-25 15zM520 255l22 0 0 18-22-4zM520 278l18 0 0 15-18-2zM555 268l22 0 0 22-22-4zM225 145l15-8 0 30-12 12zM250 212l15 5-8 10zM205 390l20 15-15 40-18-25zM310 425l28-10-8 40-35-10zM165 380l15 8-5 8zM700 360l20 5-8 30-15-2zM775 380l15 30-25 0zM170 300l50 10-10 30-40-10zM775 325l8 15-8 8z"/>
                                    <g stroke="#93d6ee" stroke-width="4">
                                        <path d="M1506 590L1410 590 1350 660 1380 720 1440 760 1430 830 1395 880 1400 1000 1390 1100 1420 1140M1400 890L1390 1050 1470 1200 1506 1290M1506 1300L1470 1400 1500 1470M1310 1510V1535L1230 1515 1180 1620 1145 1650M1506 1540L1470 1600 1480 1700 1350 1760M1350 1730L1330 1800M670 1160L640 1320 670 1410 625 1530 600 1620 570 1640 500 1600 400 1620 340 1690M690 1900L635 1865 590 1920 560 2070 520 2170 480 2180 470 2260 500 2370M210 1740L165 1780 190 1880 240 1960 240 2110 300 2170 350 2260 400 2340 500 2345 510 2400 540 2470 590 2490 570 2530M1506 2070L1470 2130 1420 2195 1360 2180 1310 2270 1240 2320 1220 2360M1090 2430L1000 2510 990 2580 960 2600M1120 1370L1100 1400M680 490L730 460"/>
                                    </g>
                                    <path stroke="#5f9fb8" stroke-width="4" stroke-dasharray="7 5" d="M48 51L50 110 90 108 130 135 100 200 110 300 170 350 210 360 285 415 300 402 385 402 460 450 480 500 560 530 620 575 700 600 725 660 770 715 830 695 870 640 925 620 930 560 972 515 955 460 1000 380 1030 300 1060 260 1070 180 1130 140 1170 51"/>
                                    <!-- caminos -->
                                    <g stroke="#ccd9d6" stroke-width="3">
                                        <path d="M325 51L270 250M520 51L480 180 550 190 560 220 615 230M700 51L660 250 615 380M540 520L400 780M600 560L460 730 630 825 690 720 860 820M41 600L150 540M41 440L100 395M1040 440L1240 600M1050 310L1506 560M1150 180L1320 290 1506 400M1060 620L1240 740V790M950 790L1200 950M41 1300L200 1400 245 1570M190 940L150 1015 110 1000M1060 1050L1080 1000 900 900M1120 990L1506 1030M1380 600L1506 680M190 1390L120 1210M320 1420L440 1420M1280 970L1250 1020 1500 1120M180 660L120 790M230 740L200 900M330 1110L250 1400M1330 1090L1440 1110"/>
                                    </g>
                                    <g stroke="#c3cad4" stroke-width="5">
                                        <path d="M885 51V570M400 345L640 380 690 418 885 425M885 575H930L1040 640 1300 855 1340 875 1400 890 1506 895M1506 310L1400 400 1280 515 1180 560 1090 570 1000 660 950 740 865 835M1000 51L1020 200 1030 440 1040 600M1330 51L1360 90 1506 190M200 720L240 850 280 960 340 1110 390 1270 430 1400 450 1500 445 1640 500 1730M41 1180L250 1290 440 1410 560 1490 730 1590M245 690L380 880 430 940 590 1130 660 1130 900 1250 1200 1380 1506 1505M945 870L940 890 1280 1110 1330 1200 1390 1310 1460 1360 1400 1460 1370 1450 1350 1490 1370 1500 1300 1650 1250 1760M1075 1150L1100 1350 1110 1500 1030 1650M600 1310L850 1360M870 1280L830 1370 805 1480 1040 1650M815 1500L700 1640 560 1830M700 1640L900 1800M41 1580L150 1645 440 1550M350 1600L350 1660 290 1720 300 1760M150 1645L120 1660 41 1680M41 2080L160 1960M300 1730L330 1810 190 1920M180 1960L215 2110 130 2150 155 2290 190 2500 200 2637M950 820L960 860 940 890 1100 1000"/>
                                    </g>
                                    <g stroke="#d7dbe2" stroke-width="6">
                                        <path d="M41 1930L300 2030 500 2170 700 2260 900 2330 1000 2440M500 2030L750 2200 900 2300 1040 2430 1200 2490 1506 2500M1250 1760L1240 2030 1200 2160M1506 1860L1350 2010 1220 2170M900 1660L1300 1990 1506 2200M680 2310L730 2300 1000 2530M580 1800L780 1830 1160 2100 1280 2210 1300 2320 1350 2500M985 1960L990 1970 1040 1900 1506 1980M1000 2020L980 1960M910 2330L700 2540M1506 1720L1120 1650M1350 2380L1506 2470M960 2160L1040 2100M1180 1740L1506 2000M1090 1740L1240 1880"/>
                                    </g>
                                    <path stroke="#c3cad4" stroke-width="8" d="M825 51V680L850 800 880 950 883 1080 872 1240 912 1370 935 1560 945 1770 920 1950 915 2120 870 2290 960 2380"/>
                                    <path stroke="#dfe2e8" stroke-width="4" d="M915 1100L935 1400 960 1780M990 1760L1000 2160"/>
                                    <!-- rutas -->
                                    <g stroke="#7a8fb5" stroke-width="19">
                                        <path d="M485 51L465 150 430 260 385 360 300 530 225 660 165 790 115 890C80 960 85 1010 115 1080L200 1200C260 1290 270 1370 300 1450L340 1590 400 1680 450 1740 475 1800 430 1890 418 1990 418 2150 415 2230 400 2310 380 2370 375 2430 400 2490 450 2530"/>
                                        <path stroke-width="11" d="M41 260L90 350 140 470 180 610 225 655M160 795L250 845 310 873 430 940Q490 975 560 950L680 905Q730 885 780 915L1000 1060 1200 1190Q1240 1225 1330 1210L1506 1183"/>
                                        <path stroke-width="17" d="M41 2310L150 2290 210 2295 300 2330 375 2370"/>
                                    </g>
                                    <g stroke="#94a8cb" stroke-width="13">
                                        <path d="M485 51L465 150 430 260 385 360 300 530 225 660 165 790 115 890C80 960 85 1010 115 1080L200 1200C260 1290 270 1370 300 1450L340 1590 400 1680 450 1740 475 1800 430 1890 418 1990 418 2150 415 2230 400 2310 380 2370 375 2430 400 2490 450 2530"/>
                                        <path stroke-width="7" d="M41 260L90 350 140 470 180 610 225 655M160 795L250 845 310 873 430 940Q490 975 560 950L680 905Q730 885 780 915L1000 1060 1200 1190Q1240 1225 1330 1210L1506 1183"/>
                                        <path stroke-width="12" d="M41 2310L150 2290 210 2295 300 2330 375 2370"/>
                                    </g>
                                    <path stroke="#8599bf" stroke-width="6" d="M430 1690Q480 1750 580 1738M440 1730L520 1760 570 1795 500 1790 460 1850M490 1730L470 1800M540 1738L480 1790M430 1710L460 1790 420 1880M350 2360L400 2400 395 2470M380 2370L360 2430 380 2500"/>
                                    <path fill="#8fa1c0" stroke="#73859f" stroke-width="4" d="M850 2604q45-22 90 0z"/>
                                </svg>

                                <svg class="absolute inset-0 w-full h-full">
                                    <defs>
                                        <g id="pin"><path d="M0 15C-1 12-4 11-7 8A10 10 0 1 1 7 8C4 11 1 12 0 15z" fill="#fff" stroke="#00000030" stroke-width=".5"/><circle r="9"/></g>
                                        <path id="fork" d="M-4-5v3q0 2 1.5 2V5M-1-5v3q0 2-1.5 2M-2.500-5v4M2.500 5V-4q2 1 2 5h-2" fill="none" stroke="#fff" stroke-width="1.2"/>
                                        <g id="cup"><path d="M-3-5H3V-2Q3 1 0 1T-3-2z" fill="#fff"/><path d="M0 1V4M-3 5H3" fill="none" stroke="#fff" stroke-width="1.5"/></g>
                                        <g id="cart"><path d="M-5-5h2l2 6h5M-2-3h6l-1 3h-4z" fill="#fff" stroke="#fff"/><circle cx="-1" cy="4" r="1.200" fill="#fff"/><circle cx="3" cy="4" r="1.200" fill="#fff"/></g>
                                        <g id="train"><rect x="-6" y="-6" width="12" height="12" rx="3" fill="#4d6478" stroke="#fff"/><rect x="-3" y="-4" width="6" height="7" rx="1" fill="none" stroke="#fff"/><path d="M-3 0H3M0-4V0" stroke="#fff"/></g>
                                        <path id="shield" d="M-6-6H6V3Q5 6 0 7-5 6-6 3z" fill="#5f9a3c" stroke="#e3efd9" stroke-width="1.5"/>
                                        <path id="shield3" d="M-10-6H10V4Q8 6 0 7-8 6-10 4z" fill="#5f9a3c" stroke="#e3efd9" stroke-width="1.5"/>
                                        <path id="cuchilla" d="M286 262C297 252 304 244 308 232S322 203 330 197L366 164"/>
                                        <path id="tomas" d="M139 104Q180 108 216 129"/>
                                    </defs>
                                    <!-- escudos de ruta -->
                                    <g>
                                        <use href="#shield" x="59" y="212"/><use href="#shield3" x="63" y="259"/><use href="#shield" x="43" y="363"/><use href="#shield" x="89" y="461"/><use href="#shield" x="124" y="548"/><use href="#shield3" x="330" y="342"/><use href="#shield" x="128" y="673"/><use href="#shield" x="61" y="750"/>
                                        <g fill="#fff" font-size="8" font-weight="700" text-anchor="middle">
                                            <text x="59" y="215">5</text><text x="63" y="262">102</text><text x="43" y="366">5</text><text x="89" y="464">5</text><text x="124" y="551">5</text><text x="330" y="345">102</text><text x="128" y="676">5</text><text x="61" y="753">1</text>
                                        </g>
                                    </g>
                                    <g paint-order="stroke" stroke="#fff" stroke-opacity=".8" stroke-width="2" stroke-linejoin="round">
                                        <!-- barrios -->
                                        <g font-size="10" font-weight="500" letter-spacing="1" fill="#4a4d52">
                                            <text x="1" y="8">E SIERRA</text>
                                            <text x="-1" y="542">ES</text>
                                            <text x="-3" y="726">S TORRES</text>
                                            <g text-anchor="middle">
                                                <text x="280" y="213">ABAYUBA</text><text x="362" y="283">ABAYUBÁ</text><text x="290" y="444">COLÓN</text><text x="223" y="563">CONCILIACIÓN</text><text x="348" y="648">SAYAGO</text><text x="181" y="682">NUEVO PARÍS</text><text x="287" y="729">BELVEDERE</text><text x="58" y="739">MARACANA</text><text x="376" y="794">PRADO</text><text x="326" y="805">PASO MOLINO</text><text x="202" y="798">TRES OMBÚES</text><text x="84" y="811">LA PALOMA</text><text x="246" y="831">LA TEJA</text>
                                                <g font-size="8" fill="#5f6368"><text x="158" y="391">LEZICA</text><text x="319" y="471">FERROCARRIL</text><text x="209" y="547">CONCILIACIÓN</text></g>
                                            </g>
                                        </g>
                                        <!-- localidades -->
                                        <g font-size="12" font-weight="500" fill="#333639" text-anchor="middle">
                                            <text x="231" y="86">Villa Paz S.A.</text><text x="210" y="156">Costa y</text><text x="210" y="169">Guillamón</text><text x="265" y="179">La Paz</text>
                                        </g>
                                        <!-- calles -->
                                        <g font-size="10" fill="#3c4043">
                                            <text><textPath href="#tomas">Tomas Aldabalde</textPath></text>
                                            <text><textPath href="#cuchilla">Cam. a la Cuchilla Pereira</textPath></text>
                                            <text transform="translate(334 208) rotate(37)">Camino La Paz Mendoza</text>
                                            <text transform="translate(71 221) rotate(55)">Camino Fauquet</text>
                                            <text transform="translate(-4 229) rotate(28)">n. Altuna</text>
                                            <text x="465" y="284">Camino</text>
                                            <text transform="translate(157 444) rotate(-58)">Niña</text>
                                            <text transform="translate(145 467) rotate(32)">Antonio Rubio</text>
                                            <text transform="translate(131 461) rotate(84)">Cno. Melilla</text>
                                            <text transform="translate(12 649) rotate(76)">Cno. Cibils</text>
                                            <text transform="translate(463 635) rotate(-52)">Av. de las Instrucciones</text>
                                            <g font-size="12" font-weight="500"><text transform="translate(305 105) rotate(-58)">DEPARTAMENTO DE</text><text transform="translate(336 128) rotate(-58)">DEPARTAMENTO DE MONTEVIDEO</text></g>
                                        </g>
                                        <!-- estaciones -->
                                        <g font-size="12" font-weight="500" fill="#4d6478">
                                            <g text-anchor="end"><text x="291" y="4">Estación De Tren</text><text x="291" y="17">Atanasio Sierra</text></g>
                                            <text x="308" y="415">Terminal Colón</text><text x="319" y="543">Parada Camino Edison</text><text x="347" y="826">Estación Yatay</text>
                                        </g>
                                        <!-- lugares -->
                                        <g font-size="13">
                                            <g text-anchor="end" fill="#d5661c"><text x="117" y="78">EL BRASERO</text><text x="117" y="91">RUTA 5 nueva</text><text x="37" y="641">Bodegon</text><text x="418" y="781">McDonald's</text></g>
                                            <text x="298" y="328" fill="#d5661c">Bodegas Carrau</text>
                                            <g fill="#e0435a"><g text-anchor="end"><text x="181" y="325">Hospital Gustavo</text><text x="181" y="338">Saint Bois</text></g><text x="385" y="667">Círculo Católico -</text><text x="385" y="680">Sanatorio Galicia</text></g>
                                            <g fill="#1d9467"><text x="374" y="363">Complejo Juveniles</text><text x="374" y="376">CA River Plate</text><text x="-1" y="838">ica</text></g>
                                            <g fill="#71879a" text-anchor="end"><text x="293" y="374">TIMBER S.A</text><text x="285" y="622">Facultad de</text><text x="285" y="635">Agronomía |</text><text x="285" y="648">Universidad de</text><text x="285" y="661">la República</text></g>
                                            <g fill="#8a4bdb" text-anchor="end"><text x="229" y="420">Castillo Idiarte Borda</text><text x="407" y="738">Museo Juan</text><text x="407" y="751">Manuel Blanes</text></g>
                                            <g fill="#3874e0"><text x="463" y="224">TYT INC</text><text x="19" y="522">UAM</text><text x="321" y="576">El Dorado -</text><text x="321" y="589">Supermercado</text><text x="94" y="650">Macromercado</text><text x="94" y="663">Paso de la Arena</text><text x="427" y="846">Nuevocentro</text></g>
                                            <text x="280" y="865" fill="#8fb3a5">Parque</text>
                                        </g>
                                    </g>
                                    <use href="#train" x="301" y="6"/><use href="#train" x="297" y="411"/><use href="#train" x="309" y="539"/><use href="#train" x="337" y="822"/>
                                    <g fill="#fb8528"><use href="#pin" x="131" y="77"/><use href="#pin" x="284" y="321"/><use href="#pin" x="9" y="343"/><use href="#pin" x="51" y="635"/><use href="#pin" x="431" y="774"/></g>
                                    <use href="#fork" x="131" y="77"/><use href="#fork" x="51" y="635"/><use href="#fork" x="431" y="774"/><use href="#cup" x="284" y="321"/><use href="#cup" x="9" y="343"/>
                                    <g fill="#f0465a"><use href="#pin" x="195" y="324"/><use href="#pin" x="372" y="666"/></g>
                                    <path d="M192 320v8M198 320v8M192 324h6M369 662v8M375 662v8M369 666h6" stroke="#fff" stroke-width="2"/>
                                    <g fill="#0d96f6"><use href="#pin" x="61" y="515"/><use href="#pin" x="307" y="575"/><use href="#pin" x="81" y="649"/></g>
                                    <use href="#cart" x="61" y="515"/><use href="#cart" x="307" y="575"/><use href="#cart" x="81" y="649"/>
                                    <g fill="#78909c"><use href="#pin" x="306" y="367"/><use href="#pin" x="299" y="634"/></g>
                                    <use href="#pin" x="360" y="362" fill="#17a06b"/>
                                    <circle cx="306" cy="367" r="3.500" fill="#fff"/><circle cx="360" cy="362" r="3.500" fill="#fff"/>
                                    <path d="M293 633l6-3 6 3-6 3zM295 635v3q4 3 8 0v-3l-4 2z" fill="#fff"/>
                                    <g fill="#a665e8"><use href="#pin" x="241" y="413"/><use href="#pin" x="421" y="737"/></g>
                                    <path d="M416 736l5-4 5 4zM417 741h8M418 737v4M421 737v4M424 737v4" fill="none" stroke="#fff" stroke-width="1.2"/>
                                    <path d="M248 432C247 422 236 420 236 410A12 12 0 0 1 260 410C260 420 249 422 248 432z" fill="#ea4335" stroke="#c5221f" stroke-width=".6"/>
                                    <circle cx="248" cy="410" r="4.500" fill="#a50e0e"/>
                                    <text x="10" y="855" font-size="19" font-weight="500" fill="#5f6368" stroke="#fff" stroke-width="2" paint-order="stroke">Google</text>
                                </svg>

                                <button type="button" aria-label="Pantalla completa" class="absolute top-[9px] right-[9px] size-9 bg-white rounded-xs shadow flex items-center justify-center">
                                    <svg class="size-4" viewBox="0 0 16 16" fill="none" stroke="#5f6368" stroke-width="2"><path d="M1 5V1h4M11 1h4v4M15 11v4h-4M5 15H1v-4"/></svg>
                                </button>
                                <button type="button" aria-label="Controles de la cámara" class="absolute bottom-[21px] right-[9px] size-9 bg-white rounded-full shadow flex items-center justify-center">
                                    <svg class="size-5" viewBox="0 0 20 20" fill="none" stroke="#5f6368" stroke-width="2"><path d="M7 4l3-3 3 3M7 16l3 3 3-3M4 7l-3 3 3 3M16 7l3 3-3 3"/></svg>
                                </button>
                                <div class="absolute bottom-0 right-0 h-[13px] pr-[6px] bg-[#f5f5f5]/70 flex items-center gap-[11px] text-[9px] text-black">
                                    <button type="button">Combinaciones de teclas</button>
                                    <span>Datos del mapa ©2026 Google</span>
                                    <a href="#">Condiciones</a>
                                    <a href="#">Informar un error en el mapa</a>
                                </div>
                                <div class="absolute bottom-[11px] left-[11px] h-[31px] px-[10px] bg-white border border-gray-300 rounded shadow-sm flex items-center text-[10px] text-gray-800 font-['DejaVu_Sans_Mono',monospace]">Lat: -34.802959, Lng: -56.230976</div>
                            </div>
                        </section>
                    </div>
                </div>
            </main>
            <footer class="h-[3px] shrink-0 bg-white border-t border-gray-300"></footer>
        </div>
    </div>
</body>
</html>
